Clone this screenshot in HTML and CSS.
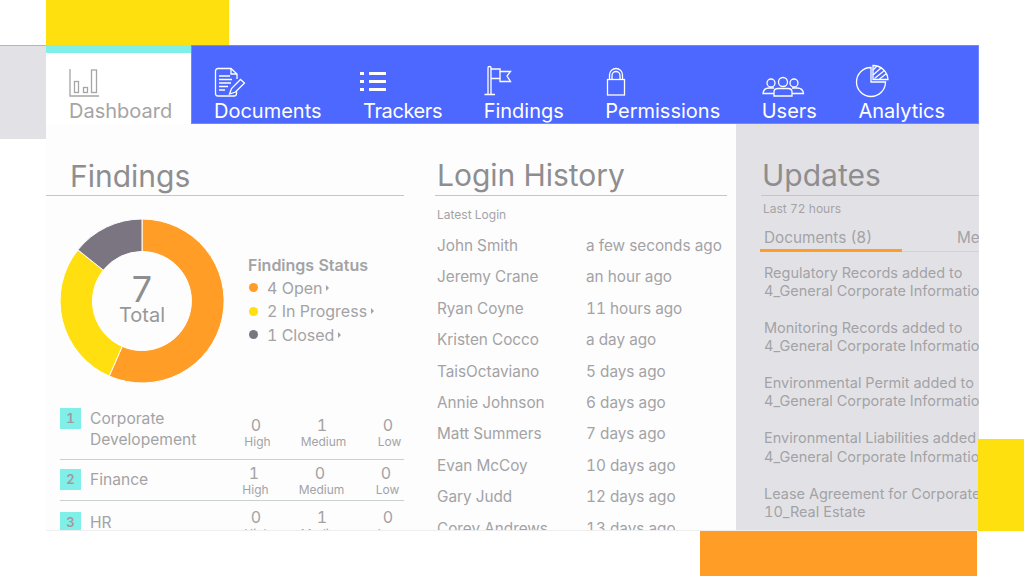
FILE: index.html
```html
<!DOCTYPE html>
<html lang="en">
<head>
    <meta charset="UTF-8">
    <meta name="viewport" content="width=device-width, initial-scale=1.0">
    <title>Dashboard</title>
    <link rel="stylesheet" href="styles.css">
</head>
<body>

<!-- colour blocks behind the window -->
<div class="block block_yellow_top"></div>
<div class="block block_grey_left"></div>
<div class="block block_yellow_right"></div>
<div class="block block_orange"></div>

<div class="window">

    <!-- top nav -->
    <nav class="nav">
        <a class="nav_item nav_active" href="javascript:;">
            <svg class="nav_icon" width="32" height="36" viewBox="0 0 32 36">
                <path d="M1 7V34H30"/>
                <rect x="5.5" y="19.5" width="4" height="11"/>
                <rect x="14.5" y="25.5" width="4" height="5"/>
                <rect x="22.5" y="8" width="5" height="22.5"/>
            </svg>
            <span>Dashboard</span>
        </a>
        <div class="nav_rest">
            <a class="nav_item" href="javascript:;">
                <svg class="nav_icon" width="32" height="36" viewBox="0 0 32 36">
                    <path d="M23 17V12L17 6.5H4A2.500 2.500 0 0 0 1.500 9V31.500A2.500 2.500 0 0 0 4 34H20A2.500 2.500 0 0 0 22.500 31.500V29"/>
                    <path d="M17 6.500V12H23"/>
                    <path d="M5 14H16M5 17.500H18M5 21H17M5 24.500H14M5 28H11"/>
                    <path d="M15.500 32L17.500 26.500L26.500 17.500L30.500 21L21.500 30Z"/>
                </svg>
                <span>Documents</span>
            </a>
            <a class="nav_item nav_item_trackers" href="javascript:;">
                <svg class="nav_icon nav_icon_solid" width="28" height="36" viewBox="0 0 28 36">
                    <rect x="1" y="10" width="4" height="3"/>
                    <rect x="10" y="10" width="17" height="3"/>
                    <rect x="1" y="18" width="4" height="3"/>
                    <rect x="10" y="18" width="17" height="3"/>
                    <rect x="1" y="26" width="4" height="3"/>
                    <rect x="10" y="26" width="17" height="3"/>
                </svg>
                <span>Trackers</span>
            </a>
            <a class="nav_item" href="javascript:;">
                <svg class="nav_icon" width="28" height="36" viewBox="0 0 28 36">
                    <path d="M0.500 32.500H11M4 32.500V5.500Q4 4.500 5.500 4.500Q7 4.500 7 5.500V32.500"/>
                    <path d="M7 7H16V9.500H26.500L23 14L26.500 19.500H16V16.500H7"/>
                    <path d="M16 9.500V16.500"/>
                </svg>
                <span>Findings</span>
            </a>
            <a class="nav_item nav_item_permissions" href="javascript:;">
                <svg class="nav_icon" width="20" height="36" viewBox="0 0 20 36">
                    <rect x="1.500" y="17.500" width="17" height="15.500"/>
                    <path d="M3.500 17.500V13A6.500 6.500 0 0 1 16.500 13V17.500"/>
                    <path d="M6 17.500V13.500A4 4 0 0 1 14 13.500V17.500"/>
                </svg>
                <span>Permissions</span>
            </a>
            <a class="nav_item" href="javascript:;">
                <svg class="nav_icon" width="43" height="36" viewBox="0 0 43 36">
                    <circle cx="9" cy="21" r="4"/>
                    <circle cx="21" cy="20" r="4.500"/>
                    <circle cx="32" cy="21" r="4"/>
                    <path d="M12 26H7Q1.500 26 1 31.500H12"/>
                    <path d="M30 26H35Q41 26 41.500 31.500H30"/>
                    <path d="M12 34V30Q12 26.500 16 26.500H26Q30 26.500 30 30V34Z"/>
                </svg>
                <span>Users</span>
            </a>
            <a class="nav_item nav_item_analytics" href="javascript:;">
                <svg class="nav_icon" width="34" height="36" viewBox="0 0 34 36">
                    <path d="M16 5.500A14.500 14.500 0 1 0 30.500 20H16Z"/>
                    <path d="M18 3.500A15 15 0 0 1 33 17.500H18Z"/>
                    <path d="M18 8L22 4M18 13L26.500 5.500M19.500 16.500L29.500 8.500M24.500 17L31.500 11.500"/>
                </svg>
                <span>Analytics</span>
            </a>
        </div>
    </nav>

    <div class="main">

        <!-- findings -->
        <section class="findings">
            <h2 class="heading heading_findings">Findings</h2>

            <div class="chart_row">
                <div class="donut">
                    <svg width="164" height="164" viewBox="0 0 164 164">
                        <path class="seg_orange" d="M82 0A82 82 0 1 1 49.200 157.100L62.200 127.400A49.500 49.500 0 1 0 82 32.500Z"/>
                        <path class="seg_yellow" d="M49.200 157.100A82 82 0 0 1 17.890 30.870L43.300 51.140A49.500 49.500 0 0 0 62.200 127.400Z"/>
                        <path class="seg_grey" d="M17.890 30.870A82 82 0 0 1 82 0V32.500A49.500 49.500 0 0 0 43.300 51.140Z"/>
                    </svg>
                    <div class="donut_text">
                        <div class="donut_num">7</div>
                        <div class="donut_label">Total</div>
                    </div>
                </div>
                <div class="legend">
                    <div class="legend_title">Findings Status</div>
                    <div class="legend_row"><i class="dot dot_orange"></i>4 Open<b class="caret"></b></div>
                    <div class="legend_row"><i class="dot dot_yellow"></i>2 In Progress<b class="caret"></b></div>
                    <div class="legend_row"><i class="dot dot_grey"></i>1 Closed<b class="caret"></b></div>
                </div>
            </div>

            <div class="status_row status_row_1">
                <div class="badge">1</div>
                <div class="status_name">Corporate Developement</div>
                <div class="status_values">
                    <div class="value"><div class="value_num">0</div><div class="value_label">High</div></div>
                    <div class="value"><div class="value_num">1</div><div class="value_label">Medium</div></div>
                    <div class="value"><div class="value_num">0</div><div class="value_label">Low</div></div>
                </div>
            </div>
            <div class="status_row status_row_2">
                <div class="badge">2</div>
                <div class="status_name">Finance</div>
                <div class="status_values">
                    <div class="value"><div class="value_num">1</div><div class="value_label">High</div></div>
                    <div class="value"><div class="value_num">0</div><div class="value_label">Medium</div></div>
                    <div class="value"><div class="value_num">0</div><div class="value_label">Low</div></div>
                </div>
            </div>
            <div class="status_row status_row_3">
                <div class="badge">3</div>
                <div class="status_name">HR</div>
                <div class="status_values">
                    <div class="value"><div class="value_num">0</div><div class="value_label">High</div></div>
                    <div class="value"><div class="value_num">1</div><div class="value_label">Medium</div></div>
                    <div class="value"><div class="value_num">0</div><div class="value_label">Low</div></div>
                </div>
            </div>
        </section>

        <!-- login history -->
        <section class="logins">
            <h2 class="heading heading_logins">Login History</h2>
            <div class="small_note logins_note">Latest Login</div>
            <ul class="login_list">
                <li class="login_row"><span class="login_name">John Smith</span><span>a few seconds ago</span></li>
                <li class="login_row"><span class="login_name">Jeremy Crane</span><span>an hour ago</span></li>
                <li class="login_row"><span class="login_name">Ryan Coyne</span><span>11 hours ago</span></li>
                <li class="login_row"><span class="login_name">Kristen Cocco</span><span>a day ago</span></li>
                <li class="login_row"><span class="login_name">TaisOctaviano</span><span>5 days ago</span></li>
                <li class="login_row"><span class="login_name">Annie Johnson</span><span>6 days ago</span></li>
                <li class="login_row"><span class="login_name">Matt Summers</span><span>7 days ago</span></li>
                <li class="login_row"><span class="login_name">Evan McCoy</span><span>10 days ago</span></li>
                <li class="login_row"><span class="login_name">Gary Judd</span><span>12 days ago</span></li>
                <li class="login_row"><span class="login_name">Corey Andrews</span><span>13 days ago</span></li>
            </ul>
        </section>

        <!-- updates -->
        <section class="updates">
            <h2 class="heading heading_updates">Updates</h2>
            <div class="small_note updates_note">Last 72 hours</div>
            <div class="tabs">
                <div class="tab tab_on">Documents (8)</div>
                <div class="tab">Messages</div>
            </div>
            <div class="update_item">Regulatory Records added to<br>4_General Corporate Information</div>
            <div class="update_item">Monitoring Records added to<br>4_General Corporate Information</div>
            <div class="update_item">Environmental Permit added to<br>4_General Corporate Information</div>
            <div class="update_item">Environmental Liabilities added to<br>4_General Corporate Information</div>
            <div class="update_item">Lease Agreement for Corporate Office<br>10_Real Estate</div>
        </section>

    </div>
</div>

</body>
</html>
```

FILE: styles.css
```css
*{
    padding: 0;
    margin: 0;
    box-sizing: border-box;
}
html, body{
    height: 100%;
}
body{
    position: relative;
    overflow: hidden;
    background: #fff;
    font-family: "Inter", "Liberation Sans", sans-serif;
    font-variant-numeric: tabular-nums;
    color: #a3a3a6;
}
li{
    list-style: none;
}
a{
    text-decoration: none;
}

/* colour blocks */
.block{
    position: absolute;
}
.block_yellow_top{
    left: 46px;
    top: 0;
    width: 183px;
    height: 45px;
    background: #ffe00f;
}
.block_grey_left{
    left: 0;
    top: 45px;
    width: 46px;
    height: 94px;
    background: #e2e2e6;
    border-top: 1px solid #b5b5b8;
}
.block_yellow_right{
    left: 978px;
    top: 439px;
    width: 46px;
    height: 92px;
    background: #ffe00f;
    z-index: 2;
}
.block_orange{
    left: 700px;
    top: 531px;
    width: 277px;
    height: 45px;
    background: #ff9d27;
    z-index: 2;
}

/* window */
.window{
    position: absolute;
    left: 46px;
    top: 45px;
    width: 933px;
    height: 486px;
    background: #fdfdfd;
    overflow: hidden;
    display: flex;
    flex-direction: column;
    border-bottom: 1px solid #eeeeee;
}

/* nav */
.nav{
    display: flex;
    height: 79px;
    flex-shrink: 0;
}
.nav_rest{
    flex: 1;
    display: flex;
    gap: 41.500px;
    padding: 17px 0 0 23px;
    background: #4c68ff;
    box-shadow: inset 0 0 0 1px #7388ff;
}
.nav_item{
    display: flex;
    flex-direction: column;
    align-items: flex-start;
    font-size: 20px;
    line-height: 24px;
    color: #fff;
}
.nav_item span{
    margin-top: 1px;
}
.nav_active{
    width: 145px;
    padding: 9px 0 0 23px;
    background: #fff;
    border-top: 8px solid #80efe7;
    color: #a5a5a5;
}
.nav_icon{
    display: block;
    fill: none;
    stroke: currentColor;
    stroke-width: 1.3;
}
.nav_icon_solid{
    fill: currentColor;
    stroke: none;
}
.nav_item_trackers{
    letter-spacing: -0.400px;
}
.nav_item_trackers svg{
    margin-left: -4px;
}
.nav_item_permissions svg{
    margin-left: 1px;
}
.nav_item_analytics svg{
    margin-left: -3px;
}

/* columns */
.main{
    flex: 1;
    display: flex;
    min-height: 0;
}
.heading{
    height: 72px;
    display: flex;
    align-items: flex-end;
    font-size: 30px;
    font-weight: 400;
    line-height: 36px;
    padding-bottom: 2px;
    color: #8e8e90;
    border-bottom: 1px solid #c4c6ca;
}
.small_note{
    font-size: 12px;
    line-height: 16px;
}

/* findings */
.findings{
    width: 374px;
    padding-right: 16px;
}
.heading_findings{
    padding-left: 24px;
    padding-bottom: 1px;
}
.chart_row{
    display: flex;
    gap: 24px;
    margin: 23px 0 25px 14px;
}
.donut{
    position: relative;
    width: 164px;
    height: 164px;
}
.donut svg{
    display: block;
}
.donut path{
    stroke: #fff;
    stroke-width: 1;
}
.seg_orange{
    fill: #ff9d27;
}
.seg_yellow{
    fill: #ffdf10;
}
.seg_grey{
    fill: #7a7580;
}
.donut_text{
    position: absolute;
    left: 0;
    right: 0;
    top: 55px;
    text-align: center;
}
.donut_num{
    font-size: 36px;
    line-height: 31px;
    color: #8e8e90;
}
.donut_label{
    font-size: 20px;
    line-height: 20px;
    color: #979799;
}
.legend{
    margin-top: 37px;
    font-size: 16px;
}
.legend_title{
    font-size: 16px;
    font-weight: 600;
    line-height: 18px;
    margin-bottom: 2px;
}
.legend_row{
    display: flex;
    align-items: center;
    height: 23.500px;
    white-space: nowrap;
}
.dot{
    width: 9px;
    height: 9px;
    border-radius: 50%;
    margin-right: 9px;
    margin-left: 1px;
}
.dot_orange{
    background: #ff9d27;
}
.dot_yellow{
    background: #ffdf10;
}
.dot_grey{
    background: #7a7580;
}
.caret{
    width: 0;
    height: 0;
    margin-left: 4px;
    border-left: 3px solid #a3a3a6;
    border-top: 3px solid transparent;
    border-bottom: 3px solid transparent;
}

.status_row{
    display: flex;
    margin-left: 14px;
    border-bottom: 1px solid #c9d0d0;
}
.status_row_1{
    height: 52px;
}
.status_row_2{
    height: 41px;
    padding-top: 9px;
}
.status_row_3{
    height: 60px;
    padding-top: 11px;
    border-bottom: none;
}
.badge{
    width: 21px;
    height: 21px;
    margin-right: 9px;
    background: #80efe7;
    font-size: 13px;
    font-weight: 600;
    line-height: 21px;
    text-align: center;
    color: #a09aa0;
    flex-shrink: 0;
}
.status_name{
    flex: 1;
    padding-top: 1px;
    font-size: 15.600px;
    line-height: 20.500px;
}
.status_values{
    display: flex;
    gap: 16px;
    margin-right: -9px;
    height: 34px;
}
.status_row_1 .status_values{
    margin-top: 8px;
}
.status_row_2 .status_values{
    margin-top: -5px;
    margin-right: -7px;
}
.status_row_3 .status_values{
    margin-top: -4px;
}
.value{
    width: 50px;
    text-align: center;
}
.value_num{
    font-size: 16px;
    line-height: 18px;
}
.value_label{
    font-size: 12px;
    line-height: 16px;
    margin-left: 3px;
}

/* login history */
.logins{
    width: 316px;
    padding: 0 9px 0 15px;
}
.heading_logins{
    padding-left: 2px;
}
.logins_note{
    margin: 11px 0 0 2px;
}
.login_list{
    margin: 7px 0 0 2px;
}
.login_row{
    display: flex;
    font-size: 15.300px;
    line-height: 31.400px;
    white-space: nowrap;
}
.login_name{
    width: 149px;
    flex-shrink: 0;
}

/* updates */
.updates{
    width: 243px;
    padding-left: 25px;
    background: #e2e2e6;
    overflow: hidden;
    white-space: nowrap;
}
.heading_updates{
    padding-left: 1px;
}
.updates_note{
    margin: 5px 0 0 2px;
}
.tabs{
    display: flex;
    gap: 51px;
    margin: 8px 0 11.500px -1px;
    width: 300px;
    border-bottom: 1px solid #d2d2d5;
}
.tab{
    font-size: 15.300px;
    line-height: 26px;
    height: 27px;
    margin-bottom: -1px;
    padding-left: 4px;
}
.tab_on{
    width: 142px;
    border-bottom: 3px solid #ff9d27;
}
.update_item{
    font-size: 14.500px;
    line-height: 18.400px;
    margin: 0 0 18.450px 3px;
}
```
